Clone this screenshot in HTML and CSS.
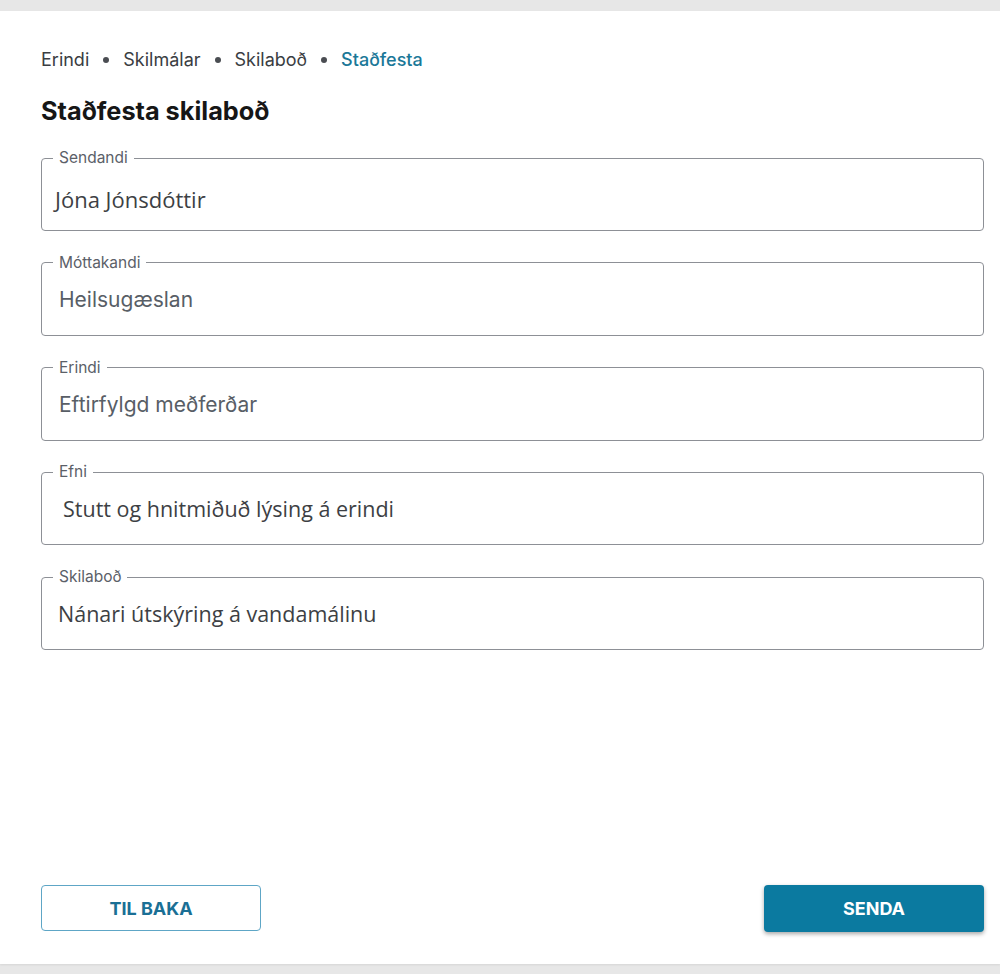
FILE: index.html
```html
<!DOCTYPE html>
<html lang="is">
<head>
<meta charset="utf-8">
<title>Staðfesta skilaboð</title>
<link rel="stylesheet" href="styles.css">
</head>
<body>
<main class="card">
  <nav class="crumbs">
    <span class="crumb">Erindi</span>
    <span class="dot"></span>
    <span class="crumb">Skilmálar</span>
    <span class="dot"></span>
    <span class="crumb">Skilaboð</span>
    <span class="dot"></span>
    <span class="crumb active">Staðfesta</span>
  </nav>
  <h1 class="title">Staðfesta skilaboð</h1>
  <div class="fields">
    <fieldset class="field">
      <legend>Sendandi</legend>
      <div class="value v-open v-sendandi">Jóna Jónsdóttir</div>
    </fieldset>
    <fieldset class="field">
      <legend>Móttakandi</legend>
      <div class="value v-inter">Heilsugæslan</div>
    </fieldset>
    <fieldset class="field">
      <legend>Erindi</legend>
      <div class="value v-inter">Eftirfylgd meðferðar</div>
    </fieldset>
    <fieldset class="field">
      <legend>Efni</legend>
      <div class="value v-open v-efni">Stutt og hnitmiðuð lýsing á erindi</div>
    </fieldset>
    <fieldset class="field">
      <legend>Skilaboð</legend>
      <div class="value v-open v-skilabod">Nánari útskýring á vandamálinu</div>
    </fieldset>
  </div>
  <div class="actions">
    <button class="btn btn-outline" type="button">TIL BAKA</button>
    <button class="btn btn-primary" type="button">SENDA</button>
  </div>
</main>
</body>
</html>
```

FILE: styles.css
```css
html, body {
  margin: 0;
  padding: 0;
}
body {
  background: #e7e7e7;
  font-family: Inter, "Noto Sans", sans-serif;
  color: #1b1b1b;
  height: 974px;
  overflow: hidden;
}
.card {
  margin-top: 11px;
  height: 953px;
  box-sizing: border-box;
  background: #ffffff;
  padding: 37px 16px 32px 41px;
  display: flex;
  flex-direction: column;
  box-shadow: 0 1px 2px rgba(0,0,0,0.08);
}
.crumbs {
  display: flex;
  align-items: center;
  font-size: 18px;
  line-height: 24px;
  color: #3a3d42;
  height: 24px;
}
.dot {
  width: 6px;
  height: 6px;
  border-radius: 50%;
  background: #4a4d52;
  margin: 0 14px;
}
.crumb.active {
  color: #1b7898;
  font-weight: 500;
}
.title {
  margin: 23px 0 0 0;
  font-size: 25.3px;
  line-height: 32px;
  font-weight: 700;
  color: #161616;
}
.fields {
  margin-top: 23px;
  display: flex;
  flex-direction: column;
  gap: 23.75px;
}
.field {
  margin: 0;
  padding: 0 14px;
  border: 1.5px solid #8d9096;
  border-radius: 4px;
  height: 81px;
  box-sizing: border-box;
  min-width: 0;
}
.field legend {
  font-family: Inter, "Noto Sans", sans-serif;
  font-size: 15.5px;
  line-height: 16px;
  color: #5b6068;
  padding: 0 6px;
  margin-left: -3px;
}
.value {
  font-size: 21px;
  line-height: 28px;
  margin-top: 15px;
}
.v-inter {
  font-family: Inter, "Noto Sans", sans-serif;
  color: #585e66;
  padding-left: 3px;
}
.v-open {
  font-family: "Open Sans", "Noto Sans", sans-serif;
  color: #3d3f44;
  font-size: 21.5px;
}
.v-sendandi {
  margin-left: -1px;
  margin-top: 19px;
  font-size: 22px;
}
.v-efni {
  padding-left: 7px;
}
.v-skilabod {
  padding-left: 2px;
}
.actions {
  margin-top: auto;
  display: flex;
  justify-content: space-between;
  align-items: flex-start;
}
.btn {
  width: 220px;
  height: 47px;
  border-radius: 4px;
  font-family: Inter, "Noto Sans", sans-serif;
  font-size: 18px;
  font-weight: 700;
  cursor: pointer;
}
.btn-outline {
  background: #ffffff;
  border: 1.5px solid #5ea6c6;
  color: #1a6f95;
  height: 46px;
}
.btn-primary {
  background: #0b7aa0;
  border: none;
  color: #ffffff;
  box-shadow: 0 2px 4px rgba(0,0,0,0.35);
}
```
